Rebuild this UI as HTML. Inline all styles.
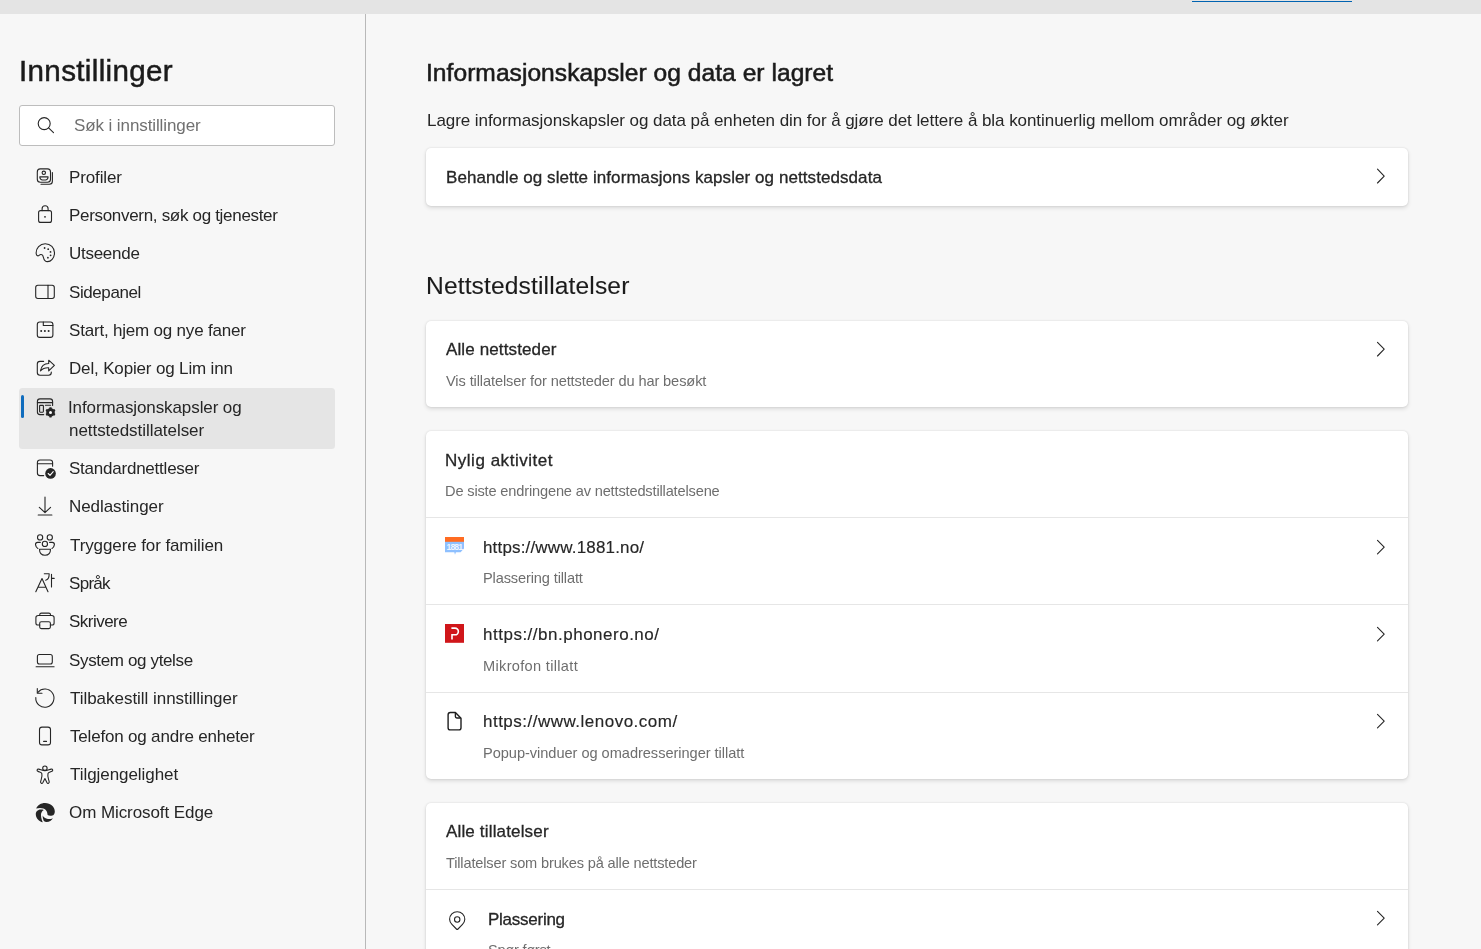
<!DOCTYPE html>
<html><head><meta charset="utf-8"><style>
html,body{margin:0;padding:0;width:1481px;height:949px;overflow:hidden;background:#f7f7f7;font-family:'Liberation Sans', sans-serif;}
.t{position:absolute;white-space:nowrap;font-family:'Liberation Sans', sans-serif;font-weight:400;will-change:transform;}
.abs{position:absolute;}
#topbar{left:0;top:0;width:1481px;height:14px;background:#e4e4e4;}
#tabline{left:1192px;top:1px;width:160px;height:1px;background:#0063b1;}
#vline{left:365px;top:14px;width:1px;height:935px;background:#b9b9b9;}
#search{left:19px;top:105px;width:314px;height:39px;border:1px solid #bdbdbd;border-radius:3px;background:#fff;}
#sel{left:19px;top:388px;width:316px;height:61px;background:#e5e5e5;border-radius:3.5px;}
#selbar{left:21px;top:395px;width:3px;height:23px;background:#0f6cbd;border-radius:2px;}
.card{position:absolute;left:426px;width:982px;background:#fff;border-radius:5px;box-shadow:0 0 2px rgba(0,0,0,.12),0 2px 4px rgba(0,0,0,.12);}
.div{position:absolute;left:426px;width:982px;height:1px;background:#e6e6e6;}
.chev{position:absolute;left:1376px;width:10px;height:16px;}
</style></head><body>
<div id="topbar" class="abs"></div>
<div id="tabline" class="abs"></div>
<div id="vline" class="abs"></div>
<div id="search" class="abs"></div>
<div id="sel" class="abs"></div>
<div id="selbar" class="abs"></div>
<div class="card" style="top:148px;height:58px"></div>
<div class="card" style="top:321px;height:86px"></div>
<div class="card" style="top:431px;height:348px"></div>
<div class="card" style="top:803px;height:200px"></div>
<div class="div" style="top:517px"></div>
<div class="div" style="top:604px"></div>
<div class="div" style="top:692px"></div>
<div class="div" style="top:889px"></div>
<svg class="abs" style="left:0;top:0" width="1481" height="949" viewBox="0 0 1481 949">
<g fill="none" stroke="#262626" stroke-width="1.1" stroke-linecap="round" stroke-linejoin="round">
<!-- search -->
<circle cx="44.2" cy="123.6" r="6"/>
<path d="M48.6 127.9 L53.5 132.6"/>
<!-- profiler -->
<rect x="37.3" y="168.9" width="13.2" height="13.4" rx="3"/>
<circle cx="43.8" cy="172.8" r="1.7"/>
<path d="M39.8 176.9 H48.1 Q48.1 180 44 180 Q39.8 180 39.8 176.9 Z"/>
<path d="M52.4 172.5 V181.3 Q52.4 184.3 49.4 184.3 H41"/>
<!-- lock -->
<rect x="38.6" y="210.6" width="12.9" height="11.8" rx="2"/>
<path d="M42.1 210.6 V208.8 A3 3 0 0 1 48.1 208.8 V210.6"/>
<!-- palette -->
<path d="M36.2 253.8 C35.6 248 40.2 243.7 45.2 243.7 C50.6 243.7 54.5 248 54.5 252.8 C54.5 258.3 50.6 261.6 47.6 261.6 C44.6 261.6 43.9 259.5 43.4 257.3 C43 255.3 42.6 254.2 40.8 254.5 C39.2 254.8 38.6 256.3 37.6 255.8 C36.6 255.4 36.3 254.8 36.2 253.8 Z"/>
<!-- sidepanel -->
<rect x="35.7" y="285.2" width="18.6" height="13.3" rx="2.2"/>
<path d="M48 285.2 V298.5"/>
<!-- start -->
<rect x="37.3" y="322" width="15.6" height="15.4" rx="2.5"/>
<path d="M43.3 322 V325.5 H52.9"/>
<!-- share -->
<path d="M43.6 361.4 H40 Q37.3 361.4 37.3 364.1 V372.6 Q37.3 375.3 40 375.3 H48.6 Q51.3 375.3 51.3 372.6 V372.1"/>
<path d="M48.7 360.2 L54.4 365.4 L48.7 370.8 V367.7 C45 367.5 42.3 368.8 40.5 370.8 C41.2 366.2 44 363.6 48.7 363.5 Z"/>
<!-- cookies/settings -->
<path d="M43.7 414.6 H40 Q37.4 414.6 37.4 412 V401.6 Q37.4 398.9 40 398.9 H50 Q52.6 398.9 52.6 401.6 V405.4"/>
<path d="M37.4 402.6 H52.6"/>
<rect x="39.6" y="405.4" width="3.8" height="6.8" rx="0.6"/>
<path d="M45.4 405.3 H50.6"/>
<!-- standard browser -->
<path d="M43.7 475.6 H40 Q37.4 475.6 37.4 473 V462.6 Q37.4 460 40 460 H50 Q52.6 460 52.6 462.6 V466.3"/>
<path d="M37.4 463.7 H52.6"/>
<!-- download -->
<path d="M45 497 V512.2 M39.3 507.3 L45 512.6 L50.6 507.3 M38.2 515 H51.9"/>
<!-- family -->
<circle cx="40.1" cy="537.4" r="2.6"/>
<circle cx="49.8" cy="537.4" r="2.6"/>
<circle cx="44.9" cy="543.9" r="2.6"/>
<path d="M40.3 542.4 H37.6 Q35.5 542.4 35.5 544.6 Q35.8 547.2 37.9 548.4"/>
<path d="M49.6 542.4 H52.3 Q54.4 542.4 54.4 544.6 Q54.1 547.2 52 548.4"/>
<path d="M39.5 549.3 H50.5 Q50.5 555.3 45 555.3 Q39.5 555.3 39.5 549.3 Z"/>
<!-- language -->
<path d="M35.8 591.8 L42 578.6 L48 591.8 M38.5 587.2 H45.6"/>
<path d="M44.3 573.8 H49.2 Q49.2 579.6 45.6 580.2"/>
<path d="M51.5 574.3 V587 M51.5 578.4 H54.2"/>
<!-- printer -->
<path d="M39.7 615.5 V614.8 Q39.7 613.1 41.4 613.1 H48.8 Q50.5 613.1 50.5 614.8 V615.5"/>
<path d="M39.7 625 H38 Q35.9 625 35.9 622.9 V617.8 Q35.9 615.5 38.2 615.5 H51.8 Q54.1 615.5 54.1 617.8 V622.9 Q54.1 625 52 625 H50.4"/>
<rect x="39.7" y="621.7" width="10.7" height="6.9" rx="1.6"/>
<!-- laptop -->
<rect x="37.4" y="654.5" width="14.9" height="9.5" rx="2"/>
<path d="M36.1 666.7 H54.1"/>
<!-- reset -->
<path d="M37.9 692.3 A9.1 9.1 0 1 1 35.8 697.5"/>
<path d="M37.3 688.6 V693.3 H42"/>
<!-- phone -->
<rect x="39.5" y="727.1" width="11" height="17.8" rx="2.5"/>
<path d="M43.6 741.4 H46.5"/>
<!-- accessibility -->
<circle cx="44.9" cy="768.2" r="2.2"/>
<path d="M44.9 770.6 C42.6 770.6 40.8 769.6 38.6 769.1 C37.1 768.8 36.5 770.6 37.8 771.3 C39.5 772.2 41.3 772.4 41.8 773.4 C42.2 775.2 42 777.4 41.2 779.6 L40.6 781.6 C40.3 783.2 42 784.1 42.8 782.7 L44.9 778.6 L47 782.7 C47.8 784.1 49.5 783.2 49.2 781.6 L48.6 779.6 C47.8 777.4 47.6 775.2 48 773.4 C48.5 772.4 50.3 772.2 52 771.3 C53.3 770.6 52.7 768.8 51.2 769.1 C49 769.6 47.2 770.6 44.9 770.6 Z"/>
<!-- 1881? no -->
<!-- pin -->
<path d="M456.4 929 L451.9 924.4 Q449.6 922 449.6 919.3 A7.6 7.6 0 0 1 464.8 919.3 Q464.8 922 462.5 924.4 L458 929 Q457.2 929.8 456.4 929 Z"/>
<circle cx="457.2" cy="919.5" r="2.7"/>
<!-- chevrons -->
<path d="M1377.5 169.2 L1384.2 176.1 L1377.5 183" />
<path d="M1377.5 342.4 L1384.2 349.2 L1377.5 356" />
<path d="M1377.5 540.4 L1384.2 547.1 L1377.5 553.8" />
<path d="M1377.5 627.4 L1384.2 634.1 L1377.5 640.8" />
<path d="M1377.5 714.4 L1384.2 721.1 L1377.5 727.8" />
<path d="M1377.5 911.4 L1384.2 918.1 L1377.5 924.8" />
</g>
<g fill="#262626">
<circle cx="45" cy="216.8" r="0.9"/>
<circle cx="44.6" cy="248" r="0.9"/><circle cx="48.2" cy="249.2" r="0.9"/><circle cx="50.5" cy="251.9" r="0.9"/><circle cx="50.6" cy="255.3" r="0.9"/><circle cx="47.9" cy="257.7" r="0.9"/>
<circle cx="41.2" cy="331" r="1"/><circle cx="44.9" cy="331" r="1"/><circle cx="48.6" cy="331" r="1"/>
<!-- gear -->
<path d="M48.35 408.68 L49.24 408.29 L49.51 407.30 L51.49 407.30 L51.76 408.29 L52.65 408.68 L53.43 409.26 L54.42 408.99 L55.42 410.71 L54.69 411.43 L54.80 412.40 L54.69 413.37 L55.42 414.09 L54.42 415.81 L53.43 415.54 L52.65 416.12 L51.76 416.51 L51.49 417.50 L49.51 417.50 L49.24 416.51 L48.35 416.12 L47.57 415.54 L46.58 415.81 L45.58 414.09 L46.31 413.37 L46.20 412.40 L46.31 411.43 L45.58 410.71 L46.58 408.99 L47.57 409.26 Z"/>
<circle cx="50.55" cy="473.4" r="5.3"/>
<!-- edge logo -->
<path d="M36.2 808.6 C37.6 805.2 41 803.1 45 803.1 C50.6 803.1 54.8 807 54.8 811.4 C54.8 813.6 53.8 815.2 52.2 815.6 C50.6 816 48.6 815.8 47.6 815.1 C47.4 814 47.4 813 47 811.9 C46.3 810.2 45 809.2 43.4 808.6 C41.2 807.8 38.6 807.9 36.2 808.6 Z"/>
<path d="M43.8 810 C41.6 811.2 40.9 813.4 41 815.3 C41.1 817.9 41.8 820.2 42.8 822.3 C39 821.4 36 818.2 35.8 814.4 C35.6 812.2 36.6 810.6 38.6 809.9 C40.2 809.4 42.2 809.5 43.8 810 Z"/>
<path d="M42.6 815.6 C43.6 817.4 45.4 818.9 48 819.1 C49.8 819.2 51.6 818.9 52.9 818.2 C51.6 820.5 49.4 822 46.6 822 C45.5 822 44.6 821.7 43.8 821.1 C43 819.4 42.6 817.5 42.6 815.6 Z"/>
</g>
<g fill="#fff">
<circle cx="50.5" cy="412.4" r="1.5"/>
</g>
<path d="M48.2 473.5 L50 475.3 L53.2 471.6" fill="none" stroke="#fff" stroke-width="1.1" stroke-linecap="round" stroke-linejoin="round"/>
<g fill="none" stroke="#1f1f1f" stroke-width="1.4" stroke-linejoin="round">
<path d="M455.4 712.5 H450.3 Q448.1 712.5 448.1 714.7 V727.7 Q448.1 729.9 450.3 729.9 H458.8 Q461 729.9 461 727.7 V718.2 Z"/>
<path d="M455.4 712.7 V716.6 Q455.4 718 456.8 718 H460.8"/>
</g>
<!-- favicons -->
<path d="M445 537 H464 V548.4 L460.6 552.2 H455.9 L455 554.8 L454.3 552.2 H445 Z" fill="#8ec0ff"/>
<rect x="445" y="537" width="19" height="4.8" fill="#ff6c22"/>
<text x="454.3" y="549.8" font-family="Liberation Sans" font-size="8.6" font-weight="700" fill="#eef5ff" text-anchor="middle" letter-spacing="-0.9">1881</text>
<rect x="445" y="624" width="19" height="18.8" fill="#d0161a"/>
<path d="M452 639.5 V634.8 H455 A3.35 3.35 0 0 0 455 628.1 H451.4" fill="none" stroke="#fff" stroke-width="1.6"/>
</svg>

<div class="t" style="left:19.0px;top:56.0px;font-size:29.6px;line-height:29.6px;letter-spacing:0.333px;color:#1b1b1b;-webkit-text-stroke:0.5px #1b1b1b;">Innstillinger</div>
<div class="t" style="left:73.5px;top:117.2px;font-size:17px;line-height:17px;letter-spacing:-0.1px;color:#707070;">Søk i innstillinger</div>
<div class="t" style="left:68.5px;top:168.7px;font-size:17px;line-height:17px;letter-spacing:-0.129px;color:#262626;">Profiler</div>
<div class="t" style="left:68.5px;top:206.9px;font-size:17px;line-height:17px;letter-spacing:-0.311px;color:#262626;">Personvern, søk og tjenester</div>
<div class="t" style="left:68.5px;top:245.0px;font-size:17px;line-height:17px;letter-spacing:-0.271px;color:#262626;">Utseende</div>
<div class="t" style="left:68.5px;top:283.9px;font-size:17px;line-height:17px;letter-spacing:-0.413px;color:#262626;">Sidepanel</div>
<div class="t" style="left:68.5px;top:321.9px;font-size:17px;line-height:17px;letter-spacing:-0.196px;color:#262626;">Start, hjem og nye faner</div>
<div class="t" style="left:68.5px;top:360.0px;font-size:17px;line-height:17px;letter-spacing:-0.157px;color:#262626;">Del, Kopier og Lim inn</div>
<div class="t" style="left:67.5px;top:398.9px;font-size:17px;line-height:17px;letter-spacing:-0.1px;color:#262626;">Informasjonskapsler og</div>
<div class="t" style="left:68.5px;top:422.4px;font-size:17px;line-height:17px;letter-spacing:-0.047px;color:#262626;">nettstedstillatelser</div>
<div class="t" style="left:68.5px;top:460.3px;font-size:17px;line-height:17px;letter-spacing:-0.231px;color:#262626;">Standardnettleser</div>
<div class="t" style="left:68.5px;top:497.9px;font-size:17px;line-height:17px;letter-spacing:-0.082px;color:#262626;">Nedlastinger</div>
<div class="t" style="left:69.5px;top:536.5px;font-size:17px;line-height:17px;letter-spacing:-0.1px;color:#262626;">Tryggere for familien</div>
<div class="t" style="left:68.5px;top:574.5px;font-size:17px;line-height:17px;letter-spacing:-0.7px;color:#262626;">Språk</div>
<div class="t" style="left:68.5px;top:612.7px;font-size:17px;line-height:17px;letter-spacing:-0.529px;color:#262626;">Skrivere</div>
<div class="t" style="left:68.5px;top:651.9px;font-size:17px;line-height:17px;letter-spacing:-0.353px;color:#262626;">System og ytelse</div>
<div class="t" style="left:69.5px;top:689.7px;font-size:17px;line-height:17px;letter-spacing:-0.036px;color:#262626;">Tilbakestill innstillinger</div>
<div class="t" style="left:69.5px;top:727.8px;font-size:17px;line-height:17px;letter-spacing:-0.187px;color:#262626;">Telefon og andre enheter</div>
<div class="t" style="left:69.5px;top:765.8px;font-size:17px;line-height:17px;letter-spacing:-0.057px;color:#262626;">Tilgjengelighet</div>
<div class="t" style="left:68.5px;top:804.0px;font-size:17px;line-height:17px;letter-spacing:-0.075px;color:#262626;">Om Microsoft Edge</div>
<div class="t" style="left:426.0px;top:61.0px;font-size:24.6px;line-height:24.6px;letter-spacing:0.031px;color:#1b1b1b;-webkit-text-stroke:0.55px #1b1b1b;">Informasjonskapsler og data er lagret</div>
<div class="t" style="left:426.8px;top:111.8px;font-size:17px;line-height:17px;letter-spacing:-0.06px;color:#262626;">Lagre informasjonskapsler og data på enheten din for å gjøre det lettere å bla kontinuerlig mellom områder og økter</div>
<div class="t" style="left:445.7px;top:169.1px;font-size:17px;line-height:17px;letter-spacing:0.073px;color:#262626;-webkit-text-stroke:0.3px #262626;">Behandle og slette informasjons kapsler og nettstedsdata</div>
<div class="t" style="left:426.0px;top:273.9px;font-size:24.6px;line-height:24.6px;letter-spacing:0.126px;color:#1b1b1b;-webkit-text-stroke:0.1px #1b1b1b;">Nettstedstillatelser</div>
<div class="t" style="left:446.0px;top:340.9px;font-size:17px;line-height:17px;letter-spacing:0.121px;color:#262626;-webkit-text-stroke:0.3px #262626;">Alle nettsteder</div>
<div class="t" style="left:446.0px;top:374.0px;font-size:14.6px;line-height:14.6px;letter-spacing:-0.107px;color:#6e6e6e;">Vis tillatelser for nettsteder du har besøkt</div>
<div class="t" style="left:444.7px;top:451.9px;font-size:17px;line-height:17px;letter-spacing:0.521px;color:#262626;-webkit-text-stroke:0.3px #262626;">Nylig aktivitet</div>
<div class="t" style="left:444.7px;top:483.8px;font-size:14.6px;line-height:14.6px;letter-spacing:-0.158px;color:#6e6e6e;">De siste endringene av nettstedstillatelsene</div>
<div class="t" style="left:483.3px;top:538.7px;font-size:17px;line-height:17px;letter-spacing:0.168px;color:#262626;-webkit-text-stroke:0.15px #262626;">https://www.1881.no/</div>
<div class="t" style="left:483.3px;top:571.0px;font-size:14.6px;line-height:14.6px;letter-spacing:-0.135px;color:#6e6e6e;">Plassering tillatt</div>
<div class="t" style="left:483.3px;top:626.2px;font-size:17px;line-height:17px;letter-spacing:0.505px;color:#262626;-webkit-text-stroke:0.15px #262626;">https://bn.phonero.no/</div>
<div class="t" style="left:483.3px;top:659.2px;font-size:14.6px;line-height:14.6px;letter-spacing:0.313px;color:#6e6e6e;">Mikrofon tillatt</div>
<div class="t" style="left:483.3px;top:713.0px;font-size:17px;line-height:17px;letter-spacing:0.491px;color:#262626;-webkit-text-stroke:0.15px #262626;">https://www.lenovo.com/</div>
<div class="t" style="left:483.3px;top:746.0px;font-size:14.6px;line-height:14.6px;letter-spacing:-0.038px;color:#6e6e6e;">Popup-vinduer og omadresseringer tillatt</div>
<div class="t" style="left:445.7px;top:823.0px;font-size:17px;line-height:17px;letter-spacing:0.16px;color:#262626;-webkit-text-stroke:0.3px #262626;">Alle tillatelser</div>
<div class="t" style="left:445.7px;top:856.0px;font-size:14.6px;line-height:14.6px;letter-spacing:-0.162px;color:#6e6e6e;">Tillatelser som brukes på alle nettsteder</div>
<div class="t" style="left:487.9px;top:911.4px;font-size:17px;line-height:17px;letter-spacing:-0.256px;color:#262626;-webkit-text-stroke:0.3px #262626;">Plassering</div>
<div class="t" style="left:487.9px;top:943.0px;font-size:14.6px;line-height:14.6px;letter-spacing:-0.256px;color:#6e6e6e;">Spør først</div>
</body></html>
